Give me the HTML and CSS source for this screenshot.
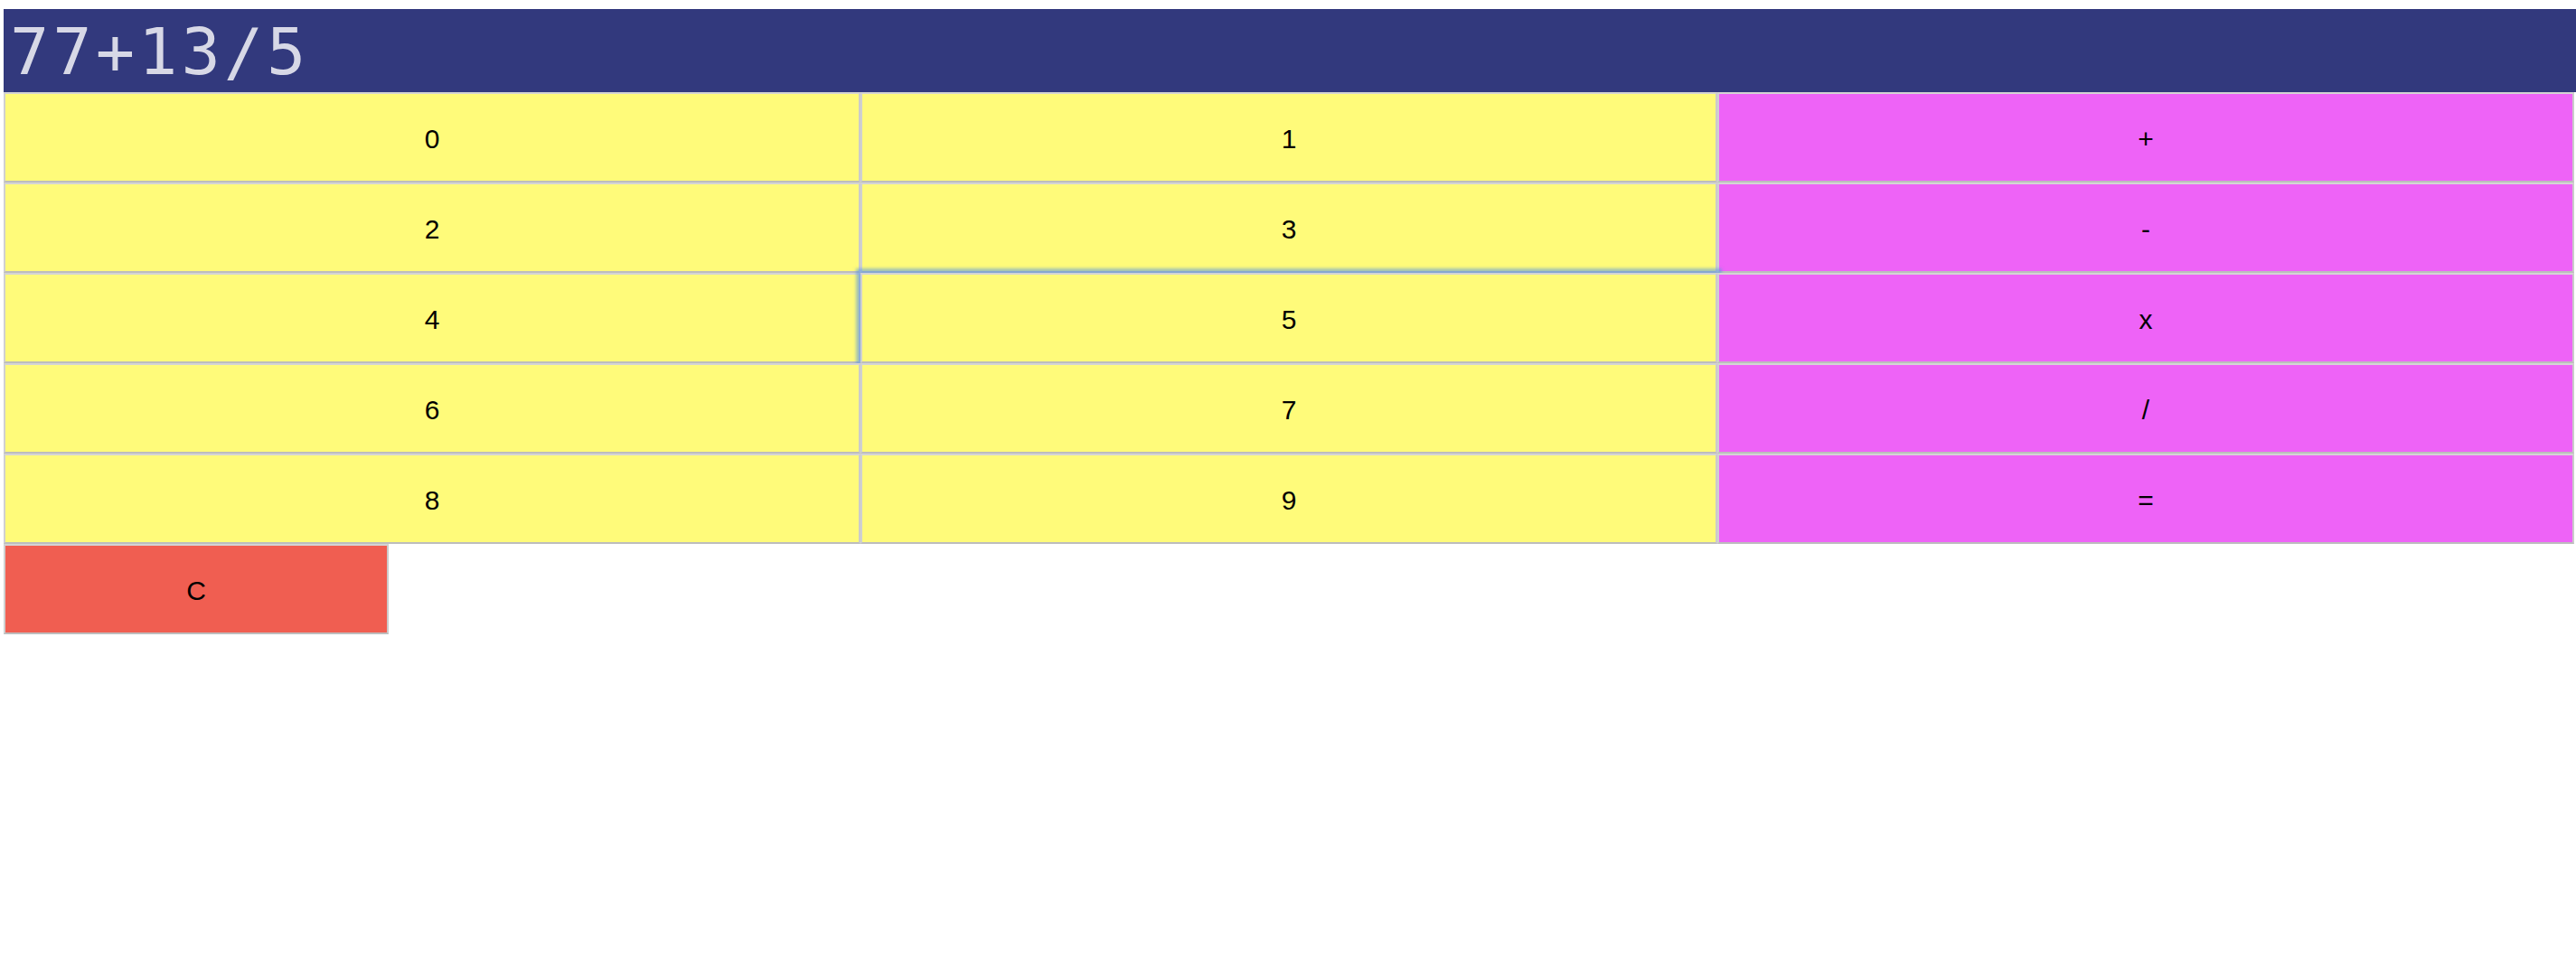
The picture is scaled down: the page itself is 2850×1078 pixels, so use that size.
FILE: index.html
```html
<!DOCTYPE html>
<html>
<head>
<meta charset="utf-8">
<link rel="stylesheet" href="styles.css">
<title>Calculator</title>
</head>
<body>
<div class="app">
  <div class="display">77+13/5</div>
  <div class="keys">
    <button class="key num">0</button>
    <button class="key num">1</button>
    <button class="key op">+</button>
    <button class="key num">2</button>
    <button class="key num">3</button>
    <button class="key op">-</button>
    <button class="key num">4</button>
    <button class="key num focused">5</button>
    <button class="key op">x</button>
    <button class="key num">6</button>
    <button class="key num">7</button>
    <button class="key op">/</button>
    <button class="key num">8</button>
    <button class="key num">9</button>
    <button class="key op">=</button>
  </div>
  <div class="extra">
    <button class="key clear">C</button>
  </div>
</div>
</body>
</html>
```

FILE: styles.css
```css
html, body {
  margin: 0;
  padding: 0;
  background: #ffffff;
}

.app {
  padding: 10px 0 0 4px;
  width: 2846px;
}

.display {
  height: 92px;
  background: #32397d;
  color: #d7d8e6;
  font-family: "DejaVu Sans Mono", monospace;
  font-size: 72px;
  letter-spacing: 4px;
  line-height: 94px;
  padding-left: 7px;
  box-sizing: border-box;
  white-space: nowrap;
  overflow: hidden;
}

.keys {
  display: grid;
  grid-template-columns: repeat(3, 948px);
}

.extra {
  display: flex;
}

.key {
  height: 100px;
  margin: 0;
  padding: 4px 0 0 0;
  box-sizing: border-box;
  border-style: solid;
  border-width: 2px;
  border-color: #d4d4d4 #cbcbcb #bdbdbd #d0d0d0;
  font-family: "Liberation Sans", Arial, sans-serif;
  font-size: 30px;
  color: #000000;
  text-align: center;
  border-radius: 0;
  outline: none;
}

.num {
  background: #fffb7a;
}

.op {
  background: #ee63f7;
}

.clear {
  width: 426px;
  background: #f05e51;
}

.focused {
  box-shadow: 0 0 3px 5px rgba(90, 150, 225, 0.55);
}
```
